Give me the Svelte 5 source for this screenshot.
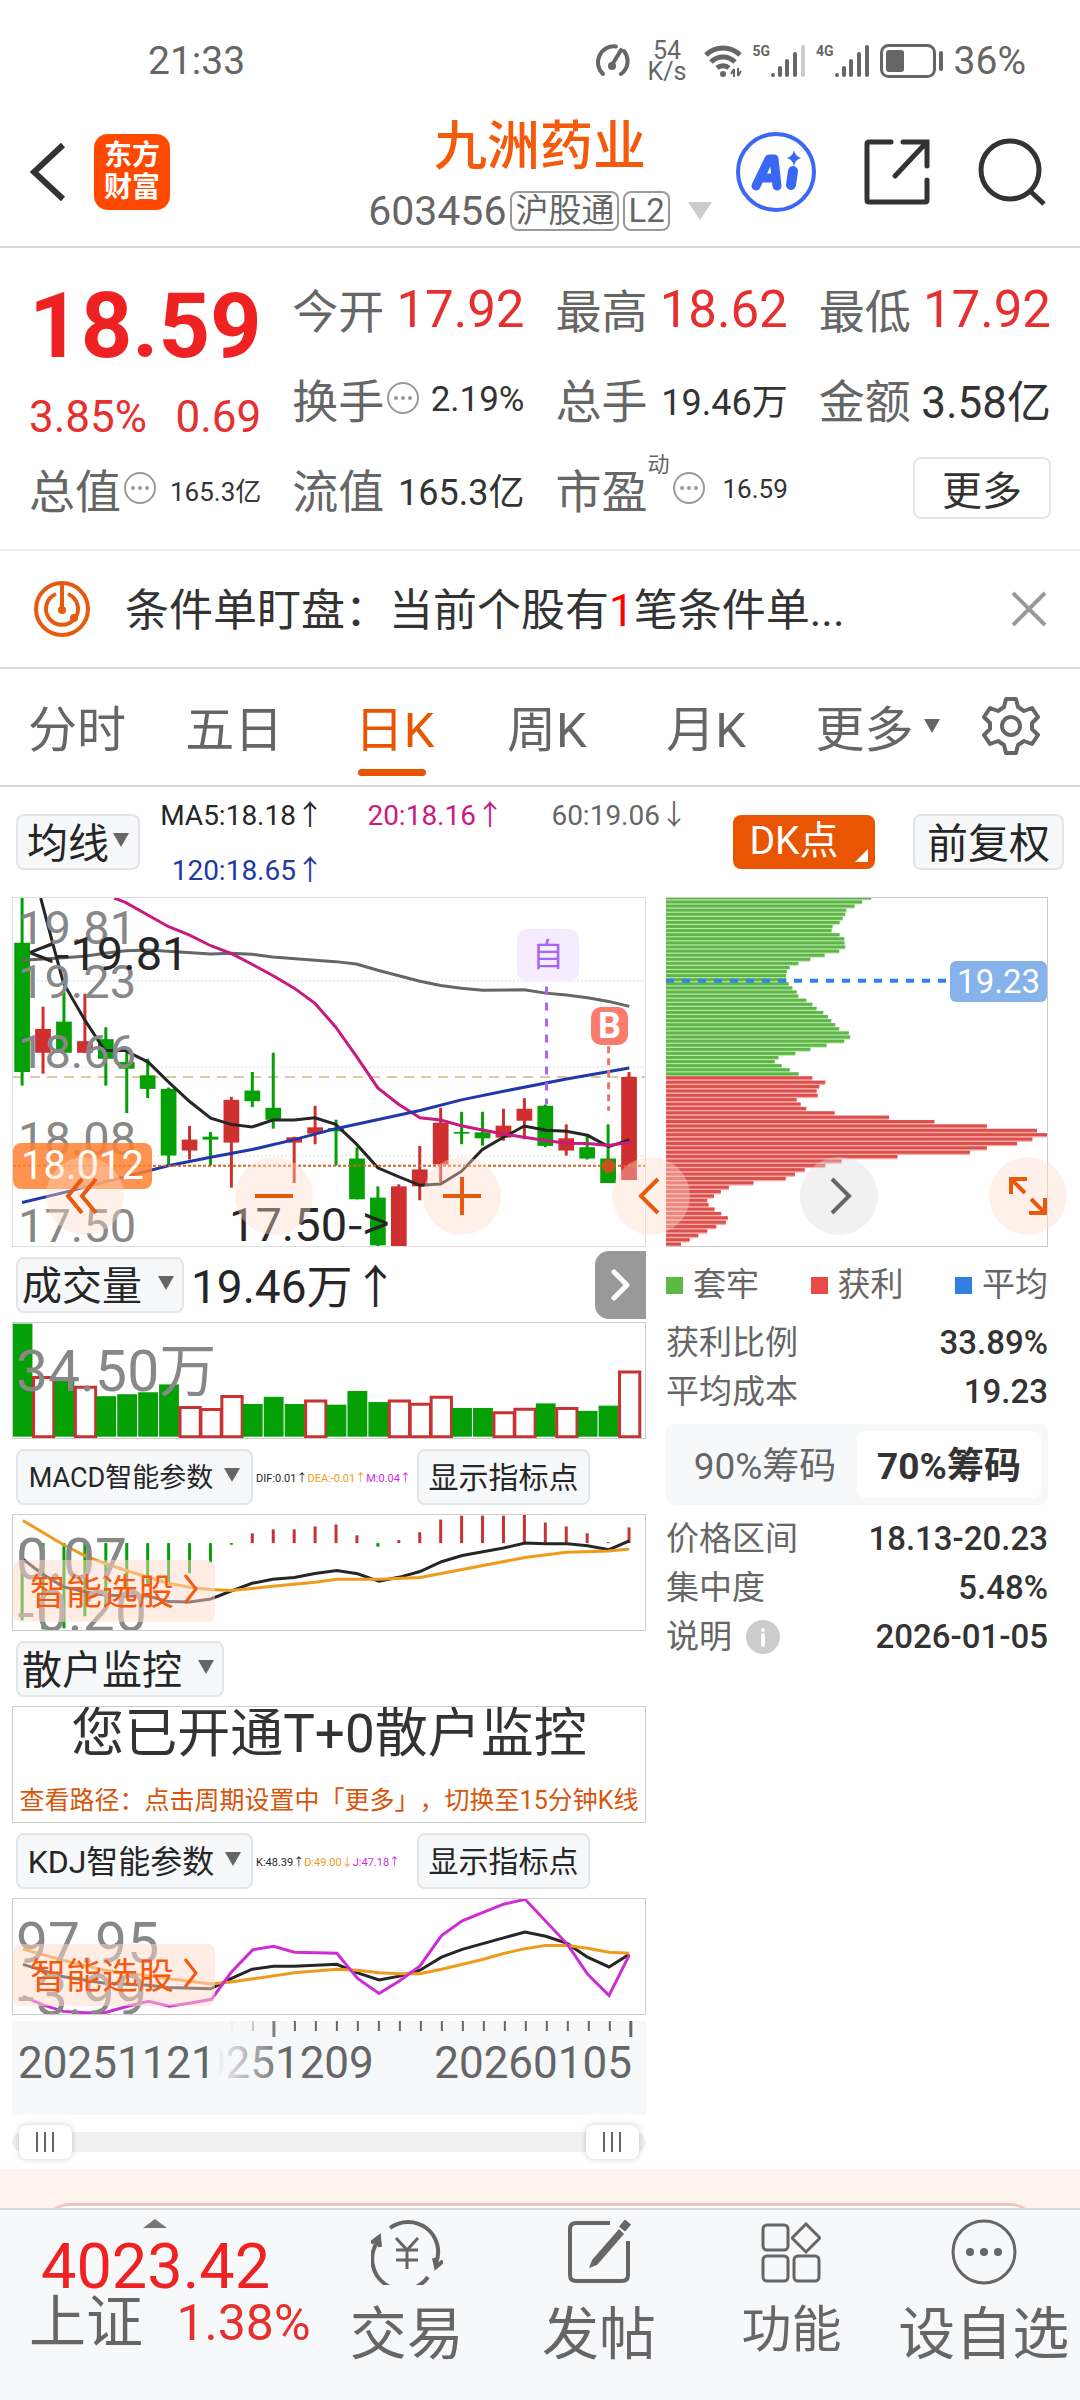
<script>
  const stats = [
    { label: "今开", value: "17.92", size: "lg", red: true },
    { label: "最高", value: "18.62", size: "lg", red: true },
    { label: "最低", value: "17.92", size: "lg", red: true },
    { label: "换手", value: "2.19%", size: "sm", tip: true },
    { label: "总手", value: "19.46万", size: "md" },
    { label: "金额", value: "3.58亿", size: "mdl" },
    { label: "总值", value: "165.3亿", size: "xs", tip: true },
    { label: "流值", value: "165.3亿", size: "md" },
    { label: "市盈", sup: "动", value: "16.59", size: "xs", tip: true },
  ];

  const tabs = ["分时", "五日", "日K", "周K", "月K"];
  let activeTab = $state("日K");
  let chips = $state("70");

  const averages = [
    { text: "MA5:18.18", arrow: "↑", color: "dark" },
    { text: "20:18.16", arrow: "↑", color: "pink" },
    { text: "60:19.06", arrow: "↓", color: "gray" },
    { text: "120:18.65", arrow: "↑", color: "blue" },
  ];

  const priceLabels = [
    { text: "19.81", y: 30 },
    { text: "19.23", y: 84 },
    { text: "18.66", y: 154 },
    { text: "18.08", y: 241 },
    { text: "17.50", y: 328 },
  ];

  const step = 50.6;
  const cx = (i) => 52 + i * step;

  // high, low, body top, body bottom, rising
  const candles = [
    [48, 614, 183, 573, 0],
    [376, 578, 443, 515, 1],
    [331, 515, 421, 515, 0],
    [337, 515, 480, 515, 1],
    [438, 614, 474, 533, 0],
    [515, 697, 543, 563, 0],
    [533, 652, 583, 624, 0],
    [620, 855, 624, 825, 0],
    [736, 837, 777, 810, 1],
    [754, 855, 768, 777, 0],
    [648, 922, 657, 786, 1],
    [573, 679, 629, 661, 0],
    [515, 744, 681, 717, 0],
    [768, 908, 770, 786, 1],
    [675, 791, 740, 759, 1],
    [717, 855, 742, 752, 0],
    [801, 957, 834, 957, 0],
    [918, 1100, 952, 1096, 0],
    [912, 1100, 918, 1100, 1],
    [796, 960, 867, 918, 1],
    [681, 905, 726, 852, 1],
    [693, 791, 754, 759, 0],
    [693, 795, 755, 773, 0],
    [684, 780, 735, 771, 1],
    [652, 776, 684, 720, 1],
    [671, 800, 675, 796, 0],
    [731, 825, 773, 810, 1],
    [766, 837, 800, 834, 0],
    [731, 908, 834, 908, 0],
    [573, 899, 588, 899, 1],
  ];

  // top of each bar, rising
  const volumes = [
    [246, 0], [411, 1], [410, 0], [441, 1], [468, 0], [462, 0], [456, 0], [432, 0],
    [503, 1], [509, 1], [469, 1], [492, 0], [470, 0], [492, 0], [483, 1], [494, 0],
    [452, 0], [486, 0], [483, 1], [493, 1], [471, 1], [504, 0], [504, 0], [519, 1],
    [508, 1], [490, 0], [506, 1], [513, 0], [497, 0], [394, 1],
  ];

  const macd = [
    1142, 1170, 1167, 1130, 1095, 1055, 1035, 1025, 998, 965, 911, 876, 864, 864,
    855, 849, 882, 917, 897, 873, 834, 822, 822, 822, 820, 843, 855, 876, 903, 858,
  ];

  const trapped = [
    695, 668, 645, 620, 617, 609, 600, 579, 576, 600, 614, 615, 617, 599, 555, 512,
    476, 450, 441, 439, 440, 447, 458, 471, 476, 500, 518, 531, 551, 565, 575, 587,
    599, 628, 632, 614, 561, 512, 467, 416, 405, 426, 450, 477,
  ];
  const profit = [
    518, 557, 539, 531, 534, 471, 483, 500, 585, 749, 885, 1043, 1194, 1224, 1180,
    1134, 1043, 992, 774, 606, 557, 495, 466, 438, 341, 267, 243, 222, 202, 206,
    224, 244, 264, 258, 229, 202, 175, 149, 123,
  ];

  const ticks = Array.from({ length: 20 }, (_, i) => i);
</script>

{#snippet tip()}
  <svg class="tip" viewBox="0 0 32 32">
    <circle cx="16" cy="16" r="15" fill="none" stroke="#999" stroke-width="2" />
    <circle cx="9" cy="16" r="2" fill="#999" />
    <circle cx="16" cy="16" r="2" fill="#999" />
    <circle cx="23" cy="16" r="2" fill="#999" />
  </svg>
{/snippet}

{#snippet signal(last)}
  <svg width="36" height="34" viewBox="0 0 36 34" stroke="#666" stroke-width="4" stroke-linecap="round">
    <path d="M3 31v0M10 24v7M17 17v14M25 10v21" />
    <path d="M33 3v28" stroke={last} />
  </svg>
{/snippet}

{#snippet pick()}
  <button class="pick">
    智能选股
    <svg width="14" height="32" viewBox="0 0 14 32"><path d="M1 2l11 14L1 30" fill="none" stroke="#f5590f" stroke-width="3" /></svg>
  </button>
{/snippet}

<div class="page">
  <div class="status">
    <span class="clock">21:33</span>
    <div class="status-icons">
      <svg width="36" height="36" viewBox="0 0 36 36" fill="none" stroke="#666" stroke-width="4" stroke-linecap="round">
        <path d="M9 31A16 16 0 0 1 22 3.500" /><path d="M30 8a16 16 0 0 1-3 23" />
        <path d="M27 7L18 22" /><circle cx="18" cy="23" r="2" fill="#666" />
      </svg>
      <span class="speed">54<br />K/s</span>
      <svg width="38" height="34" viewBox="0 0 38 34" fill="none" stroke="#666" stroke-width="5">
        <path d="M2 11a24 24 0 0 1 34 0M7 18a17 17 0 0 1 24 0M13 24a9 9 0 0 1 12 0" />
        <circle cx="19" cy="30" r="3" fill="#666" stroke="none" />
        <path d="M30 25v8M27 30l3-5M34 24v8M34 32l3-5" stroke-width="2" />
      </svg>
      <span class="net"><b>5G</b>{@render signal("#ccc")}</span>
      <span class="net"><b>4G</b>{@render signal("#666")}</span>
      <svg width="64" height="34" viewBox="0 0 64 34">
        <rect x="1.500" y="1.500" width="53" height="31" rx="7" fill="none" stroke="#666" stroke-width="3" />
        <rect x="6" y="6" width="18" height="22" rx="3" fill="#666" />
        <path d="M61 9v16" stroke="#666" stroke-width="4" stroke-linecap="round" />
      </svg>
      <span class="clock">36%</span>
    </div>
  </div>

  <header class="top">
    <div class="side left">
      <button class="icon" aria-label="返回">
        <svg width="36" height="60" viewBox="0 0 36 60"><path d="M33 3L4 30l29 27" fill="none" stroke="#333" stroke-width="6" /></svg>
      </button>
      <a class="logo" href="#home">东方<br />财富</a>
    </div>
    <div class="title">
      <h1>九洲药业</h1>
      <div class="code">
        603456
        <span class="tag">沪股通</span>
        <span class="tag">L2</span>
        <svg width="24" height="18" viewBox="0 0 24 18"><path d="M0 0h24L12 18z" fill="#ccc" /></svg>
      </div>
    </div>
    <div class="side right">
      <button class="icon" aria-label="Ai">
        <svg width="80" height="80" viewBox="0 0 80 80">
          <circle cx="40" cy="40" r="38" fill="none" stroke="#3a68f5" stroke-width="4" />
          <path d="M20 54L33 27h5l3 27M26 46h14" fill="none" stroke="#3a68f5" stroke-width="9" stroke-linejoin="round" stroke-linecap="round" />
          <path d="M57 39l-2 14" stroke="#3a68f5" stroke-width="10" stroke-linecap="round" />
          <path d="M58 18q1 6 7 8-6 2-7 8-1-6-7-8 6-2 7-8z" fill="#3a68f5" />
        </svg>
      </button>
      <button class="icon" aria-label="分享">
        <svg width="66" height="66" viewBox="0 0 66 66" fill="none" stroke="#333" stroke-width="5">
          <path d="M27 3H5q-2 0-2 2v56q0 2 2 2h56q2 0 2-2V41M39 3h24v24M61 5L31 37" stroke-linecap="round" />
        </svg>
      </button>
      <button class="icon" aria-label="搜索">
        <svg width="68" height="68" viewBox="0 0 68 68" fill="none" stroke="#333" stroke-width="5">
          <circle cx="32" cy="32" r="29" /><path d="M52 53l14 13" />
        </svg>
      </button>
    </div>
  </header>

  <section class="quote">
    <div class="price">
      <strong>18.59</strong>
      <div class="change"><span>3.85%</span><span>0.69</span></div>
    </div>
    {#each stats as s}
      <div class="stat">
        <span class="name">{s.label}</span>
        {#if s.sup}<sup>{s.sup}</sup>{/if}
        {#if s.tip}{@render tip()}{/if}
        <span class="value {s.size}" class:red={s.red}>{s.value}</span>
      </div>
    {/each}
    <button class="more">更多</button>
  </section>

  <section class="notice">
    <svg width="58" height="58" viewBox="0 0 58 58" fill="none" stroke="#e55a0c" stroke-width="4">
      <circle cx="29" cy="29" r="26" />
      <path d="M23 14a16 16 0 1 0 12 0" />
      <path d="M29 4v24" /><circle cx="29" cy="30" r="4" fill="#e55a0c" stroke="none" />
      <circle cx="41" cy="38" r="4" fill="#e55a0c" stroke="none" />
    </svg>
    <p>条件单盯盘：当前个股有<em>1</em>笔条件单...</p>
    <button class="icon" aria-label="关闭">
      <svg width="36" height="36" viewBox="0 0 36 36"><path d="M2 2l32 32M34 2L2 34" stroke="#999" stroke-width="4" /></svg>
    </button>
  </section>

  <nav class="tabs">
    {#each tabs as tab}
      <button class:active={tab === activeTab} onclick={() => (activeTab = tab)}>{tab}</button>
    {/each}
    <button>更多<svg class="caret" viewBox="0 0 16 14"><path d="M0 0h16L8 14z" /></svg></button>
    <button aria-label="设置">
      <svg width="58" height="60" viewBox="0 0 58 60" fill="none" stroke="#666" stroke-width="4" stroke-linejoin="round">
        <path d="M24 3h10l2 8 6 4 8-3 6 9-6 6v6l6 6-6 9-8-3-6 4-2 8H24l-2-8-6-4-8 3-6-9 6-6v-6l-6-6 6-9 8 3 6-4z" />
        <circle cx="29" cy="30" r="9" />
      </svg>
    </button>
  </nav>

  <section class="tools">
    <button class="chip">均线<svg class="caret" viewBox="0 0 16 14"><path d="M0 0h16L8 14z" /></svg></button>
    <div class="averages">
      {#each averages as a}
        <span class={a.color}>{a.text}<i>{a.arrow}</i></span>
      {/each}
    </div>
    <button class="dk">DK点</button>
    <button class="chip">前复权</button>
  </section>

  <main class="board">
    <div class="charts">
      <div class="chart main-chart">
        <svg viewBox="30 48 1528 1050" preserveAspectRatio="none">
          <g stroke="#ddd" stroke-dasharray="2 2"><path d="M30 298H1558M30 558H1558M30 826H1558" /></g>
          <path d="M30 588H1558" stroke="#dcc8a4" stroke-width="2" stroke-dasharray="10 7" />
          {#each candles as [high, low, top, bottom, up], i}
            <path d="M{cx(i)} {high}V{low}" stroke={up ? "#d02f2f" : "#05a005"} stroke-width="3" />
            <rect x={cx(i) - 19} y={top} width="38" height={bottom - top} fill={up ? "#d02f2f" : "#05a005"} />
          {/each}
          <g fill="none" stroke-width="3">
            <polyline stroke="#666" points="52,236 152,228 203,224 252,215 303,207 357,205 508,217 557,215 608,218 658,226 760,236 810,240 860,247 912,266 1014,299 1064,312 1114,320 1165,326 1266,325 1318,335 1368,341 1419,349 1470,360 1520,375" />
            <polyline stroke="#262626" points="97,48 125,180 152,305 203,415 252,508 300,508 357,543 405,602 457,662 508,712 557,731 608,739 658,718 710,718 760,711 810,731 860,790 912,862 962,889 1014,915 1064,911 1114,873 1165,807 1216,770 1266,736 1318,749 1368,752 1419,764 1470,798 1520,778" />
            <polyline stroke="#c81a80" points="275,48 303,62 405,134 457,160 508,192 557,215 608,248 658,282 710,320 760,366 810,437 860,525 912,621 962,670 1014,711 1064,718 1114,735 1165,748 1216,760 1266,770 1318,780 1368,788 1419,789 1470,795 1520,785" />
            <polyline stroke="#2038a8" points="52,967 152,937 405,856 508,830 608,807 710,777 810,744 1014,689 1114,657 1216,631 1368,594 1520,561" />
          </g>
          <path d="M30 856H1558" stroke="#d8601c" stroke-width="2" stroke-dasharray="3 2" />
          <path d="M1320 315V670" stroke="#a866f0" stroke-width="3" stroke-dasharray="8 8" />
          <path d="M1470 495V690" stroke="#ea7868" stroke-width="3" stroke-dasharray="7 5" />
          <ellipse cx="1470" cy="857" rx="16" ry="21" fill="#c8501c" />
        </svg>
        {#each priceLabels as p}
          <span class="axis" style:top="{p.y - 20}px">{p.text}</span>
        {/each}
        <span class="extreme max"><u>&lt;-</u>19.81</span>
        <span class="extreme min">17.50<u>-&gt;</u></span>
        <span class="cursor">18.012</span>
        <span class="mark self">自</span>
        <span class="mark buy">B</span>
      </div>

      <div class="bar">
        <button class="chip wide">成交量<svg class="caret" viewBox="0 0 16 14"><path d="M0 0h16L8 14z" /></svg></button>
        <span class="amount">19.46万<i>↑</i></span>
        <button class="fold" aria-label="展开">
          <svg width="20" height="32" viewBox="0 0 20 32"><path d="M3 3l13 13L3 29" fill="none" stroke="#fff" stroke-width="5" stroke-linecap="round" stroke-linejoin="round" /></svg>
        </button>
      </div>
      <div class="chart">
        <svg viewBox="30 244 1528 352" preserveAspectRatio="none">
          {#each volumes as [top, up], i}
            {#if up}
              <rect x={cx(i) - 23} y={top} width="49" height={592 - top} fill="#fff" stroke="#c83232" stroke-width="3" />
            {:else}
              <rect x={cx(i) - 23} y={top} width="48" height={592 - top} fill="#05a005" />
            {/if}
          {/each}
        </svg>
        <span class="scale one">34.50万</span>
      </div>

      <div class="bar">
        <button class="chip wide macd">MACD智能参数<svg class="caret" viewBox="0 0 16 14"><path d="M0 0h16L8 14z" /></svg></button>
        <div class="values">
          <span class="dark">DIF:0.01<i>↑</i></span><span class="orange">DEA:-0.01<i>↑</i></span><span class="violet">M:0.04<i>↑</i></span>
        </div>
        <button class="chip show">显示指标点</button>
      </div>
      <div class="chart">
        <svg viewBox="30 820 1528 352" preserveAspectRatio="none">
          {#each macd as y, i}
            <path d="M{cx(i)} 906V{y}" stroke={y > 906 ? "#05a005" : "#c83232"} stroke-width="3" />
          {/each}
          <g fill="none" stroke-width="3">
            <polyline stroke="#262626" points="54,955 100,1000 152,1040 203,1055 252,1065 303,1068 357,1068 405,1085 457,1086 508,1077 557,1053 608,1029 658,1017 710,1011 760,999 813,990 863,1000 915,1023 965,1010 1014,993 1066,963 1116,944 1216,921 1268,906 1318,908 1370,908 1419,914 1471,926 1520,899" />
            <polyline stroke="#f09a1c" points="54,837 152,911 203,944 252,968 303,990 405,1029 457,1041 508,1048 557,1051 608,1045 658,1038 760,1026 813,1017 915,1017 1014,1011 1116,987 1268,950 1368,934 1471,930 1520,924" />
          </g>
        </svg>
        <span class="scale upper">0.07</span>
        <span class="scale lower"><u>-</u>0.20</span>
        {@render pick()}
      </div>

      <div class="bar">
        <button class="chip wide">散户监控<svg class="caret" viewBox="0 0 16 14"><path d="M0 0h16L8 14z" /></svg></button>
      </div>
      <div class="chart message">
        <p>您已开通T+0散户监控</p>
        <a href="#period">查看路径：点击周期设置中「更多」，切换至15分钟K线</a>
      </div>

      <div class="bar">
        <button class="chip wide kdj">KDJ智能参数<svg class="caret" viewBox="0 0 16 14"><path d="M0 0h16L8 14z" /></svg></button>
        <div class="values">
          <span class="dark">K:48.39<i>↑</i></span><span class="orange">D:49.00<i>↓</i></span><span class="violet">J:47.18<i>↑</i></span>
        </div>
        <button class="chip show">显示指标点</button>
      </div>
      <div class="chart">
        <svg viewBox="30 802 1528 352" preserveAspectRatio="none">
          <g fill="none" stroke-width="3">
            <polyline stroke="#262626" points="54,1002 152,1040 252,1060 357,1066 405,1073 508,1077 557,1046 608,1017 660,1008 710,1008 813,1002 863,1028 915,1050 965,1038 1014,1020 1066,980 1116,956 1216,921 1268,903 1318,916 1370,938 1419,980 1471,1010 1520,971" />
            <polyline stroke="#f09a1c" points="54,955 152,990 252,1020 405,1045 508,1062 557,1056 710,1028 813,1017 863,1020 915,1028 965,1031 1014,1031 1066,1017 1165,987 1216,969 1268,954 1318,944 1370,944 1419,953 1471,965 1520,968" />
            <polyline stroke="#d02cd4" points="54,1100 104,1127 152,1146 203,1150 252,1150 303,1132 357,1115 408,1130 460,1120 510,1109 557,1027 610,957 660,947 710,965 813,968 863,1045 915,1091 965,1052 1014,1007 1066,914 1116,869 1216,818 1268,803 1370,940 1419,1032 1471,1097 1520,974" />
          </g>
        </svg>
        <span class="scale upper">97.95</span>
        <span class="scale lower"><u>-</u>3.99</span>
        {@render pick()}
      </div>

      <div class="dates">
        <svg viewBox="30 0 1528 94" preserveAspectRatio="none">
          {#each ticks as i}
            <path
              d="M{560 + i * step} 0V{i === 2 || i === 19 ? 16 : 10}"
              stroke="#666"
              stroke-width={i === 2 || i === 19 ? 3 : 2}
              opacity={i === 0 ? 0.25 : i === 1 ? 0.6 : 1}
            />
          {/each}
        </svg>
        <span class="mid">20251209</span>
        <span class="first">20251121</span>
        <span class="last">20260105</span>
      </div>
      <div class="range">
        <input type="range" min="0" max="100" value="0" aria-label="开始日期" />
        <input type="range" min="0" max="100" value="100" aria-label="结束日期" />
      </div>
    </div>

    <aside class="cost">
      <div class="chart main-chart">
        <svg viewBox="78 50 1146 1050" preserveAspectRatio="none">
          {#each trapped as end, i}
            <rect x="78" y={45 + i * 12.35} width={end - 78} height="12" fill="#b4eaa2" />
            <rect x="78" y={45 + i * 12.35} width={end - 78} height="9" fill="#60b54a" />
          {/each}
          {#each profit as end, i}
            <rect x="78" y={588 + i * 13.2} width={end - 78} height="13" fill="#fbaaa6" />
            <rect x="78" y={588 + i * 13.2} width={end - 78} height="9" fill="#d9504d" />
          {/each}
          <path d="M78 300H925" stroke="#3380e0" stroke-width="4" stroke-dasharray="8 8" />
        </svg>
        <span class="avg">19.23</span>
      </div>
      <ul class="legend">
        <li class="g">套牢</li>
        <li class="r">获利</li>
        <li class="b">平均</li>
      </ul>
      <dl>
        <dt>获利比例</dt><dd>33.89%</dd>
        <dt>平均成本</dt><dd>19.23</dd>
      </dl>
      <div class="segment">
        <button class:on={chips === "90"} onclick={() => (chips = "90")}>90%筹码</button>
        <button class:on={chips === "70"} onclick={() => (chips = "70")}>70%筹码</button>
      </div>
      <dl>
        <dt>价格区间</dt><dd>18.13-20.23</dd>
        <dt>集中度</dt><dd>5.48%</dd>
        <dt>
          说明
          <svg width="34" height="34" viewBox="0 0 34 34">
            <circle cx="17" cy="17" r="17" fill="#ccc" />
            <circle cx="17" cy="10" r="2" fill="#fff" /><path d="M17 15v10" stroke="#fff" stroke-width="4" stroke-linecap="round" />
          </svg>
        </dt><dd>2026-01-05</dd>
      </dl>
    </aside>

    <div class="pads">
      <button aria-label="后退"><svg viewBox="0 0 78 78"><path d="M36 22L22 39l14 17M50 22L36 39l14 17" /></svg></button>
      <button aria-label="缩小"><svg viewBox="0 0 78 78"><path d="M20 39h38" /></svg></button>
      <button aria-label="放大"><svg viewBox="0 0 78 78"><path d="M20 39h38M39 20v38" /></svg></button>
      <button aria-label="左移"><svg viewBox="0 0 78 78"><path d="M46 22L29 39l17 17" /></svg></button>
      <button class="dim" aria-label="右移"><svg viewBox="0 0 78 78"><path d="M32 22l17 17-17 17" /></svg></button>
      <button aria-label="全屏"><svg viewBox="0 0 78 78"><path d="M22 37V22h16M22 22l14 14M56 41v15H40M56 56L42 42" /></svg></button>
    </div>
  </main>

  <div class="promo"><div></div></div>

  <footer>
    <a class="index" href="#index">
      <svg width="24" height="9" viewBox="0 0 24 9"><path d="M12 0l12 9H0z" fill="#777" /></svg>
      <strong>4023.42</strong>
      <span>上证<b>1.38%</b></span>
    </a>
    <a class="item" href="#trade">
      <svg width="72" height="66" viewBox="0 0 72 66" fill="none" stroke="#666" stroke-width="4">
        <path d="M19 9A30 30 0 0 1 65 44M57 58A30 30 0 0 1 7 22M0 24l8-6 1 10M72 42l-7 6-2-9" />
        <path d="M25 19l11 12 11-12M25 31h22M25 41h22M36 31v19" stroke-width="3" />
      </svg>
      交易
    </a>
    <a class="item" href="#post">
      <svg width="64" height="66" viewBox="0 0 64 66" fill="none" stroke="#666" stroke-width="4">
        <path d="M43 4H9q-6 0-6 6v46q0 6 6 6h46q6 0 6-6V22" />
        <path d="M25 41l27-31 5 5-27 31-8 3z" fill="#666" stroke="none" /><path d="M55 10l6-7" stroke-width="8" />
      </svg>
      发帖
    </a>
    <a class="item small" href="#features">
      <svg width="60" height="62" viewBox="0 0 60 62" fill="none" stroke="#666" stroke-width="3">
        <rect x="2" y="3" width="25" height="25" rx="4" /><rect x="2" y="34" width="25" height="25" rx="4" />
        <rect x="33" y="34" width="25" height="25" rx="4" /><path d="M45 2l13 13q1 1 0 2L45 30 32 17q-1-1 0-2z" />
      </svg>
      功能
    </a>
    <a class="item" href="#watch">
      <svg width="66" height="66" viewBox="0 0 66 66" fill="none" stroke="#666" stroke-width="3">
        <circle cx="33" cy="33" r="31" />
        <g fill="#666" stroke="none"><circle cx="19" cy="33" r="4" /><circle cx="33" cy="33" r="4" /><circle cx="47" cy="33" r="4" /></g>
      </svg>
      设自选
    </a>
  </footer>
</div>

<style>
  :global(body) {
    background: #fff;
  }

  .page {
    font-family: Roboto, "Noto Sans CJK SC", sans-serif;
    color: #333;
    overflow: hidden;
    text-spacing-trim: space-all;
  }

  .page :global(*) {
    box-sizing: border-box;
  }

  button {
    font: inherit;
    color: inherit;
    border: 0;
    padding: 0;
    background: none;
    cursor: pointer;
    white-space: nowrap;
  }

  a {
    color: inherit;
    text-decoration: none;
  }

  svg {
    display: block;
    flex: none;
  }

  i,
  u {
    font-style: normal;
    text-decoration: none;
    font-family: "Noto Sans CJK SC", sans-serif;
  }

  .status {
    display: flex;
    align-items: center;
    justify-content: space-between;
    height: 115px;
    padding: 7px 54px 0 148px;
    color: #666;
  }

  .clock {
    font-size: 39px;
  }

  .status-icons {
    display: flex;
    align-items: center;
    gap: 10px;
  }

  .speed {
    margin: 0 8px;
    font-size: 25px;
    line-height: 21px;
    text-align: center;
  }

  .net {
    display: flex;
  }

  .net b {
    font-size: 14px;
    line-height: 14px;
  }

  .top {
    display: grid;
    grid-template-columns: 1fr auto 1fr;
    height: 133px;
    border-bottom: 2px solid #d8d8d8;
  }

  .side {
    display: flex;
    align-items: center;
    height: 113px;
  }

  .left {
    gap: 28px;
    padding-left: 30px;
  }

  .right {
    justify-content: flex-end;
    gap: 48px;
    padding-right: 34px;
  }

  .logo {
    width: 76px;
    height: 76px;
    padding-top: 6px;
    border-radius: 14px;
    background: #ff4800;
    color: #fff;
    font-size: 28px;
    font-weight: 700;
    line-height: 32px;
    text-align: center;
  }

  .title {
    text-align: center;
  }

  h1 {
    margin: 0 0 12px;
    font-size: 53px;
    font-weight: 500;
    line-height: 64px;
    color: #f55a0c;
  }

  .code {
    display: flex;
    align-items: center;
    gap: 4px;
    font-size: 41px;
    line-height: 40px;
    color: #666;
  }

  .tag {
    padding: 0 3px;
    border: 2px solid #999;
    border-radius: 8px;
    font-size: 33px;
    line-height: 36px;
  }

  .code svg {
    margin-left: 14px;
  }

  .quote {
    display: grid;
    grid-template-columns: repeat(4, minmax(0, 1fr));
    grid-template-rows: repeat(3, 90px);
    column-gap: 31px;
    padding: 15px 29px 16px;
    border-bottom: 2px solid #eee;
  }

  .price {
    grid-row: span 2;
    color: #ee2222;
  }

  .price strong {
    display: block;
    margin-top: 14px;
    font-size: 90px;
    line-height: 100px;
  }

  .change {
    display: flex;
    justify-content: space-between;
    font-size: 44px;
    line-height: 80px;
    color: #e63030;
  }

  .stat {
    display: flex;
    align-items: center;
  }

  .name {
    font-size: 46px;
    color: #666;
  }

  .stat sup {
    align-self: flex-start;
    font-size: 22px;
    line-height: 44px;
    color: #666;
  }

  .tip {
    width: 32px;
    height: 32px;
    margin-left: 3px;
  }

  .value {
    margin-left: auto;
    padding-top: 2px;
    color: #333;
    white-space: nowrap;
  }

  .value.lg {
    font-size: 51px;
  }

  .value.mdl {
    font-size: 44px;
  }

  .value.md {
    font-size: 36px;
  }

  .value.sm {
    font-size: 35px;
  }

  .value.xs {
    font-size: 26px;
  }

  .value.red {
    color: #e63030;
  }

  .more {
    justify-self: end;
    align-self: center;
    width: 138px;
    height: 62px;
    padding-bottom: 4px;
    border: 2px solid #e6e6e6;
    border-radius: 8px;
    font-size: 40px;
  }

  .notice {
    display: flex;
    align-items: center;
    height: 118px;
    padding: 0 33px;
    border-bottom: 2px solid #d8d8d8;
  }

  .notice p {
    flex: 1;
    margin: 0 0 0 34px;
    padding-bottom: 4px;
    font-size: 44px;
    white-space: nowrap;
  }

  .notice em {
    font-style: normal;
    color: #f00;
  }

  .tabs {
    display: grid;
    grid-template-columns: 157fr 169fr 152fr 159fr 149fr 166fr 58fr;
    height: 118px;
    padding: 0 40px 0 28px;
    border-bottom: 2px solid #d8d8d8;
    font-size: 49px;
    color: #666;
  }

  .tabs button {
    display: flex;
    align-items: center;
    position: relative;
    padding-bottom: 3px;
  }

  .tabs .active {
    color: #ea5504;
  }

  .tabs .active::after {
    content: "";
    position: absolute;
    left: 3px;
    bottom: 9px;
    width: 68px;
    height: 7px;
    border-radius: 4px;
    background: #ea5504;
  }

  .caret {
    width: 16px;
    height: 14px;
    margin-left: 10px;
    fill: #666;
  }

  .tools {
    display: flex;
    align-items: center;
    height: 110px;
    padding: 0 16px;
  }

  .chip {
    display: flex;
    align-items: center;
    justify-content: center;
    height: 56px;
    padding: 0 9px 4px;
    border: 2px solid #e2e4e8;
    border-radius: 8px;
    background: #f7f8fa;
    font-size: 41px;
    color: #262626;
  }

  .tools .chip .caret {
    margin-left: 4px;
  }

  .tools .chip:last-child {
    padding: 0 12px 4px;
  }

  .averages {
    display: grid;
    grid-template-columns: 184px 180px 184px;
    text-align: right;
    font-size: 28px;
    line-height: 52px;
    white-space: nowrap;
  }

  .dk {
    position: relative;
    width: 142px;
    height: 54px;
    margin: 0 38px 0 auto;
    padding: 0 20px 2px 0;
    border-radius: 8px;
    background: #ea5504;
    font-size: 39px;
    line-height: 52px;
    color: #fff;
  }

  .dk::after {
    content: "";
    position: absolute;
    right: 7px;
    bottom: 7px;
    border-left: 13px solid transparent;
    border-bottom: 13px solid #fff;
  }

  .dark {
    color: #262626;
  }

  .pink {
    color: #c81a80;
  }

  .gray {
    color: #666;
  }

  .blue {
    color: #2038a8;
  }

  .orange {
    color: #f09a1c;
  }

  .violet {
    color: #d02cd4;
  }

  .board {
    position: relative;
    display: grid;
    grid-template-columns: 634fr 382fr;
    column-gap: 20px;
    padding: 0 32px 0 12px;
  }

  .chart {
    position: relative;
    height: 117px;
    border: 1px solid #ccc;
    overflow: hidden;
  }

  .main-chart {
    height: 350px;
    border-color: #ddd;
  }

  .chart > svg {
    width: 100%;
    height: 100%;
  }

  .chart > svg :global(*) {
    vector-effect: non-scaling-stroke;
  }

  .axis {
    position: absolute;
    left: 5px;
    font-size: 47px;
    line-height: 40px;
    color: #888;
  }

  .extreme {
    position: absolute;
    font-size: 47px;
    line-height: 44px;
    color: #262626;
  }

  .max {
    left: 15px;
    top: 30px;
  }

  .min {
    left: 216px;
    top: 301px;
  }

  .cursor {
    position: absolute;
    left: 0;
    top: 245px;
    padding: 0 8px;
    border-radius: 8px;
    background: rgba(255, 128, 48, 0.85);
    font-size: 40px;
    line-height: 46px;
    color: #fff;
  }

  .mark {
    position: absolute;
    border-radius: 10px;
    text-align: center;
  }

  .self {
    left: 504px;
    top: 31px;
    width: 62px;
    font-size: 32px;
    line-height: 53px;
    background: #f5ecff;
    color: #a866f0;
  }

  .buy {
    left: 578px;
    top: 109px;
    width: 37px;
    font-size: 36px;
    font-weight: 700;
    line-height: 38px;
    background: #fb7c6c;
    color: #fff;
  }

  .bar {
    display: flex;
    align-items: center;
    position: relative;
    height: 75px;
    padding-left: 4px;
  }

  .bar .chip {
    padding: 0 8px 3px 4px;
  }

  .bar .wide {
    font-size: 40px;
  }

  .wide .caret {
    margin-left: 16px;
  }

  .bar .macd,
  .bar .kdj {
    width: 237px;
    padding-left: 8px;
  }

  .bar .macd {
    font-size: 27px;
  }

  .bar .kdj {
    font-size: 32px;
  }

  .macd .caret,
  .kdj .caret {
    margin-left: 11px;
  }

  .bar .show {
    width: 173px;
    margin-left: auto;
    margin-right: 56px;
    padding: 0 0 3px;
    font-size: 30px;
  }

  .values {
    display: flex;
    margin-left: 3px;
    font-size: 11px;
    white-space: nowrap;
  }

  .amount {
    margin-left: 7px;
    padding-bottom: 3px;
    font-size: 46px;
    color: #262626;
  }

  .fold {
    display: flex;
    align-items: center;
    justify-content: center;
    width: 51px;
    height: 68px;
    margin-left: auto;
    border-radius: 14px 0 0 14px;
    background: #999;
  }

  .scale {
    position: absolute;
    left: 3px;
    font-size: 57px;
    line-height: 48px;
    color: #888;
  }

  .one {
    top: 25px;
  }

  .upper {
    top: 21px;
  }

  .lower {
    top: 67px;
  }

  .pick {
    display: flex;
    align-items: center;
    gap: 10px;
    position: absolute;
    left: 0;
    top: 45px;
    height: 62px;
    padding: 0 17px 4px;
    border-radius: 8px;
    background: rgba(255, 218, 202, 0.5);
    font-size: 36px;
    color: #f5590f;
  }

  .message {
    text-align: center;
    white-space: nowrap;
  }

  .message p {
    margin: 0;
    font-size: 53px;
    line-height: 54px;
  }

  .message a {
    display: block;
    margin-top: 18px;
    font-size: 25px;
    line-height: 44px;
    color: #d8560c;
  }

  .dates {
    display: flex;
    justify-content: space-between;
    position: relative;
    height: 94px;
    margin-top: 6px;
    background: #f7f8fa;
    font-size: 44px;
    line-height: 84px;
    color: #666;
  }

  .dates svg {
    position: absolute;
    width: 100%;
    height: 100%;
  }

  .dates svg path {
    vector-effect: non-scaling-stroke;
  }

  .first {
    position: relative;
    padding: 0 70px 0 6px;
    background: linear-gradient(90deg, #f7f8fa 204px, rgba(247, 248, 250, 0));
  }

  .mid {
    position: absolute;
    left: 164px;
  }

  .last {
    padding-right: 14px;
  }

  .range {
    position: relative;
    height: 54px;
  }

  .range::before {
    content: "";
    position: absolute;
    inset: 17px 0;
    border-radius: 10px;
    background: #f0f0f3;
  }

  .range input {
    appearance: none;
    position: absolute;
    left: 7px;
    top: 10px;
    width: calc(100% - 14px);
    height: 34px;
    margin: 0;
    background: none;
    pointer-events: none;
  }

  .range input::-webkit-slider-thumb {
    appearance: none;
    width: 53px;
    height: 34px;
    border-radius: 8px;
    background:
      linear-gradient(#666, #666) 17px 7px / 2px 20px no-repeat,
      linear-gradient(#666, #666) 25px 7px / 2px 20px no-repeat,
      linear-gradient(#666, #666) 33px 7px / 2px 20px no-repeat,
      #fff;
    box-shadow: 0 0 6px rgba(0, 0, 0, 0.2);
    pointer-events: auto;
  }

  .cost .main-chart {
    border-color: #ccc;
    border-left: 0;
  }

  .avg {
    position: absolute;
    right: 0;
    top: 63px;
    padding: 0 7px;
    border-radius: 6px;
    background: #86b3ec;
    font-size: 33px;
    line-height: 41px;
    color: #fff;
  }

  .legend {
    display: flex;
    justify-content: space-between;
    margin: 0;
    padding: 0;
    list-style: none;
    font-size: 33px;
    line-height: 76px;
    color: #666;
  }

  .legend li {
    display: flex;
    align-items: center;
    gap: 10px;
  }

  .legend li::before {
    content: "";
    width: 17px;
    height: 17px;
    background: #5ab845;
  }

  .legend .r::before {
    background: #e84a4a;
  }

  .legend .b::before {
    background: #3380e0;
  }

  dl {
    display: grid;
    grid-template-columns: auto auto;
    justify-content: space-between;
    margin: 0 0 8px;
    font-size: 33px;
    line-height: 49px;
    color: #666;
  }

  .legend + dl {
    margin-top: -5px;
  }

  dt {
    display: flex;
    align-items: center;
    gap: 14px;
  }

  dd {
    margin: 0;
    text-align: right;
    font-weight: 500;
    color: #333;
  }

  .segment {
    display: grid;
    grid-template-columns: 1fr 1fr;
    height: 81px;
    margin-bottom: 9px;
    padding: 7px;
    border-radius: 8px;
    background: #f7f8fa;
    font-size: 37px;
    color: #666;
  }

  .segment button {
    padding-bottom: 4px;
  }

  .segment .on {
    border-radius: 8px;
    background: #fff;
    font-weight: 700;
    color: #333;
  }

  .pads {
    display: flex;
    justify-content: space-between;
    position: absolute;
    left: 46px;
    right: 13px;
    top: 260px;
    pointer-events: none;
  }

  .pads button {
    width: 78px;
    height: 78px;
    border-radius: 50%;
    background: rgba(255, 220, 200, 0.4);
    pointer-events: auto;
  }

  .pads svg {
    fill: none;
    stroke: #e55a0c;
    stroke-width: 4;
  }

  .pads .dim {
    background: rgba(220, 220, 220, 0.4);
  }

  .pads .dim svg {
    stroke: #666;
  }

  .promo {
    height: 39px;
    padding: 34px 45px 0;
    background: #fff3ee;
    overflow: hidden;
  }

  .promo div {
    height: 60px;
    border: 3px solid #f4c6bc;
    border-radius: 24px;
    background: #fff;
  }

  footer {
    display: grid;
    grid-template-columns: 310fr repeat(4, 192fr);
    min-height: 193px;
    border-top: 2px solid #d8d8d8;
    background: #f7f8fa;
    color: #666;
  }

  .index {
    position: relative;
    padding: 9px 0 0 29px;
    white-space: nowrap;
  }

  .index svg {
    margin-left: 114px;
  }

  .index strong {
    display: block;
    padding-left: 12px;
    font-size: 63px;
    font-weight: 400;
    line-height: 78px;
    color: #ee2222;
  }

  .index span {
    display: flex;
    align-items: center;
    justify-content: space-between;
    font-size: 57px;
    line-height: 34px;
  }

  .index b {
    font-size: 50px;
    font-weight: 400;
    color: #e63030;
  }

  .item {
    display: flex;
    flex-direction: column;
    align-items: center;
    padding-top: 9px;
    font-size: 57px;
    line-height: 100px;
    white-space: nowrap;
  }

  .small {
    padding-top: 12px;
    font-size: 50px;
    line-height: 92px;
  }
</style>
